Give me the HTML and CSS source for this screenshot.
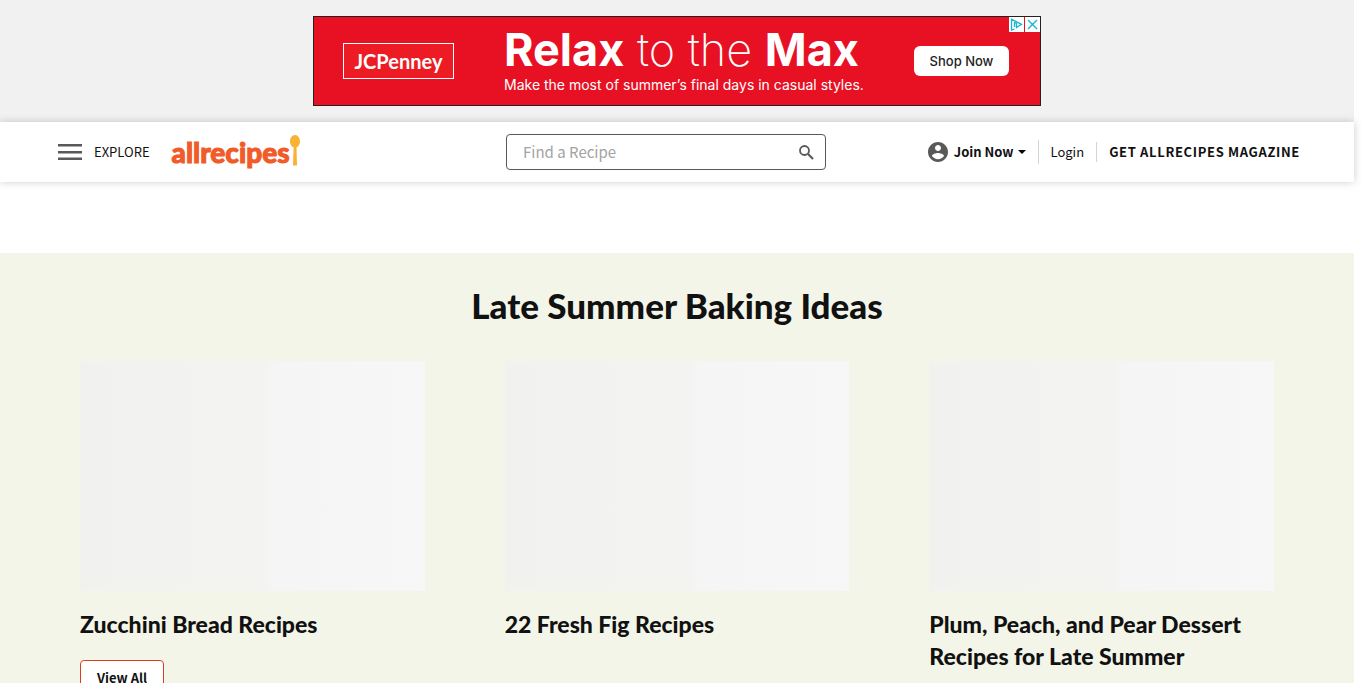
FILE: index.html
```html
<!DOCTYPE html>
<html lang="en">
<head>
<meta charset="utf-8">
<title>Allrecipes</title>
<link rel="stylesheet" href="styles.css">
</head>
<body>
<aside class="ad-bar" aria-label="Advertisement">
  <div class="ad">
    <div class="ad-brand">JCPenney</div>
    <div class="ad-copy">
      <p class="ad-headline"><b>Relax</b> to the <b>Max</b></p>
      <p class="ad-sub">Make the most of summer’s final days in casual styles.</p>
    </div>
    <button class="ad-cta" type="button">Shop Now</button>
    <div class="ad-choices">
      <button type="button" aria-label="Ad choices"><svg width="15" height="15" viewBox="0 0 15 15"><path d="M5.500 12L2.500 13V2.200L12.500 7.300 7.500 10.500V6.500L5.500 5.500V10" fill="none" stroke="#14b5cf" stroke-width="1.300"/></svg></button>
      <button type="button" aria-label="Close ad"><svg width="15" height="15" viewBox="0 0 15 15"><path d="M3 3l9 9M12 3l-9 9" fill="none" stroke="#14b5cf" stroke-width="1.400"/></svg></button>
    </div>
  </div>
</aside>
<header class="header">
  <div class="header-left">
    <button class="explore" type="button">
      <svg width="24" height="16" viewBox="0 0 24 16"><path d="M0 1.300h24M0 8.200h24M0 14.700h24" stroke="#595959" stroke-width="2.600"/></svg>
      Explore
    </button>
    <a class="logo" href="#">allrecipes<svg width="10" height="31" viewBox="0 0 10 31"><path d="M5 0C8 0 10 3 10 6.500c0 3-1.600 5-3.500 6L7 30.500H3L3.600 12.500C1.500 11.500 0 9.500 0 6.500 0 3 2 0 5 0z" fill="#f9b233"/></svg></a>
  </div>
  <form class="search">
    <input type="search" aria-label="Find a Recipe" placeholder="Find a Recipe">
    <button type="button" aria-label="Search"><svg width="15" height="15" viewBox="0 0 15 15"><circle cx="5.500" cy="5.500" r="4.500" fill="none" stroke="#595959" stroke-width="1.800"/><path d="M9 9l5 5" stroke="#595959" stroke-width="2.100"/></svg></button>
  </form>
  <nav class="account">
    <button class="join" type="button">
      <svg width="20" height="20" viewBox="2 2 20 20"><path fill="#595959" d="M12 2C6.480 2 2 6.480 2 12s4.480 10 10 10 10-4.480 10-10S17.520 2 12 2zm0 3c1.660 0 3 1.340 3 3s-1.340 3-3 3-3-1.340-3-3 1.340-3 3-3zm0 14.200c-2.500 0-4.710-1.280-6-3.220.03-1.990 4-3.080 6-3.080 1.990 0 5.970 1.090 6 3.080-1.290 1.940-3.500 3.220-6 3.220z"/></svg>
      <span>Join Now</span>
      <svg class="caret" width="8" height="4" viewBox="0 0 8 4"><path d="M0 0h8L4 4z"/></svg>
    </button>
    <a class="login" href="#">Login</a>
    <a class="magazine" href="#">Get Allrecipes Magazine</a>
  </nav>
</header>
<main class="feature">
  <h1>Late Summer Baking Ideas</h1>
  <div class="cards">
    <article class="card">
      <div class="thumb"></div>
      <h2>Zucchini Bread Recipes</h2>
      <a class="view-all" href="#">View All</a>
    </article>
    <article class="card">
      <div class="thumb"></div>
      <h2>22 Fresh Fig Recipes</h2>
    </article>
    <article class="card">
      <div class="thumb"></div>
      <h2>Plum, Peach, and Pear Dessert Recipes for Late Summer</h2>
    </article>
  </div>
</main>
</body>
</html>
```
FILE: styles.css
```css
* { box-sizing: border-box; }
html { overflow: hidden; }
body {
  margin: 0;
  padding-right: 12px;
  background: #fff;
  color: #111;
  font: 13px/20px "Noto Sans CJK JP", "Noto Sans", sans-serif;
}
button { padding: 0; border: 0; background: none; color: inherit; font: inherit; cursor: pointer; }
a { color: inherit; text-decoration: none; }
svg { display: block; flex: none; }
p, h1, h2 { margin: 0; }

.ad-bar { display: flex; justify-content: center; padding: 16px 0; background: #f1f1f1; }
.ad {
  position: relative;
  display: flex;
  align-items: center;
  width: 728px;
  height: 90px;
  padding: 0 31px 0 29px;
  border: 1px solid #222;
  background: #e81123;
  color: #fff;
  font-family: Inter, sans-serif;
}
.ad-brand {
  width: 111px;
  border: 1px solid #fff;
  background: #ed1c24;
  font: 700 20px/34px Lato, sans-serif;
  text-align: center;
}
.ad-copy { margin-left: 50px; white-space: nowrap; }
.ad-headline { font-size: 45px; font-weight: 200; line-height: 48px; }
.ad-headline b { font-weight: 700; }
.ad-sub { font-size: 14px; line-height: 22px; }
.ad-cta {
  width: 95px;
  height: 30px;
  margin-left: auto;
  border-radius: 6px;
  background: #fff;
  color: #222;
  font-size: 13px;
  font-weight: 500;
}
.ad-choices { position: absolute; top: 0; right: 0; display: flex; gap: 1px; }
.ad-choices button { background: #fff; }

.header {
  position: relative;
  display: grid;
  grid-template-columns: 448fr 320px 474fr;
  align-items: center;
  height: 60px;
  padding: 0 54px 0 58px;
  background: #fff;
  box-shadow: 0 0 8px rgba(0, 0, 0, .2);
}
.header-left { display: flex; align-items: center; gap: 22px; }
.explore { display: flex; align-items: center; gap: 12px; text-transform: uppercase; }
.logo { display: flex; align-items: center; color: #f15a29; font: 900 28px/32px Lato, sans-serif; -webkit-text-stroke: 1px #f15a29; }
.logo svg { margin-bottom: 4px; }
.search { display: flex; align-items: center; height: 36px; padding: 0 11px 0 16px; border: 1px solid #595959; border-radius: 4px; }
.search input { flex: 1; min-width: 0; padding: 0; border: 0; outline: 0; background: none; font: inherit; font-size: 15px; }
.search input::placeholder { color: #a3a3a3; }
.account { display: flex; align-items: center; justify-content: flex-end; white-space: nowrap; }
.join { display: flex; align-items: center; gap: 6px; padding-right: 12px; border-right: 1px solid #d4d4d4; font-weight: 700; line-height: 24px; }
.caret { margin-left: -2px; }
.login { padding: 0 12px; border-right: 1px solid #d4d4d4; }
.magazine { padding-left: 12px; font-weight: 700; letter-spacing: .05em; text-transform: uppercase; }

.feature { min-height: 430px; margin-top: 71px; padding: 32px 80px 24px; background: #f4f5e9; font-family: Lato, sans-serif; }
h1 { margin-bottom: 36px; font-size: 35px; font-weight: 900; line-height: 40px; text-align: center; }
.cards { display: grid; grid-template-columns: repeat(3, 1fr); gap: 80px; }
.thumb { aspect-ratio: 3 / 2; background: linear-gradient(90deg, #f1f1f0, #f3f3f1 54%, #f5f5f5 55%, #f7f7f7); }
h2 { margin: 17px 0 20px; font-size: 23px; font-weight: 900; line-height: 32px; }
.view-all {
  display: inline-block;
  padding: 7px 16px;
  border: 1px solid #d9411e;
  border-radius: 4px;
  background: #fff;
  font: 700 13px/20px "Noto Sans CJK JP", sans-serif;
}
```
